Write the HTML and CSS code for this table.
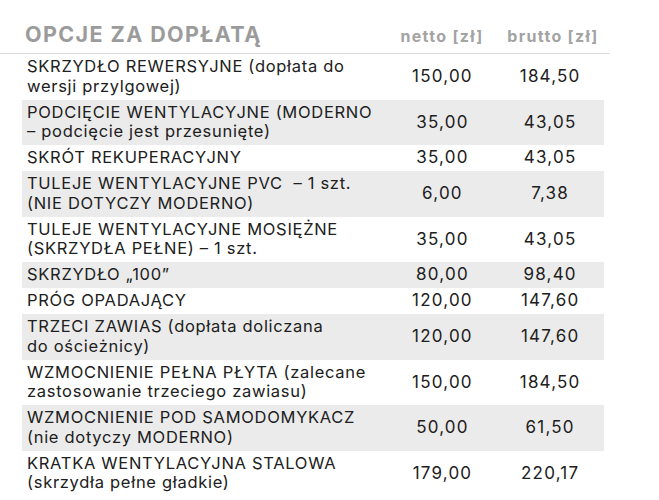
FILE: index.html
```html
<!DOCTYPE html>
<html lang="pl">
<head>
<meta charset="utf-8">
<title>Opcje za dopłatą</title>
<link rel="stylesheet" href="styles.css">
</head>
<body>
<div class="page">
  <div class="head">
    <div class="title">OPCJE ZA DOPŁATĄ</div>
    <div class="col-label">netto [zł]</div>
    <div class="col-label">brutto [zł]</div>
  </div>
  <table class="prices">
    <tbody>
      <tr><td class="name">SKRZYDŁO REWERSYJNE (dopłata do<br>wersji przylgowej)</td><td class="num">150,00</td><td class="num">184,50</td></tr>
      <tr class="alt"><td class="name">PODCIĘCIE WENTYLACYJNE (MODERNO<br>– podcięcie jest przesunięte)</td><td class="num">35,00</td><td class="num">43,05</td></tr>
      <tr><td class="name">SKRÓT REKUPERACYJNY</td><td class="num">35,00</td><td class="num">43,05</td></tr>
      <tr class="alt"><td class="name">TULEJE WENTYLACYJNE PVC &nbsp;– 1 szt.<br>(NIE DOTYCZY MODERNO)</td><td class="num">6,00</td><td class="num">7,38</td></tr>
      <tr><td class="name">TULEJE WENTYLACYJNE MOSIĘŻNE<br>(SKRZYDŁA PEŁNE) – 1 szt.</td><td class="num">35,00</td><td class="num">43,05</td></tr>
      <tr class="alt"><td class="name">SKRZYDŁO „100”</td><td class="num">80,00</td><td class="num">98,40</td></tr>
      <tr><td class="name">PRÓG OPADAJĄCY</td><td class="num">120,00</td><td class="num">147,60</td></tr>
      <tr class="alt"><td class="name">TRZECI ZAWIAS (dopłata doliczana<br>do ościeżnicy)</td><td class="num">120,00</td><td class="num">147,60</td></tr>
      <tr><td class="name">WZMOCNIENIE PEŁNA PŁYTA (zalecane<br>zastosowanie trzeciego zawiasu)</td><td class="num">150,00</td><td class="num">184,50</td></tr>
      <tr class="alt"><td class="name">WZMOCNIENIE POD SAMODOMYKACZ<br>(nie dotyczy MODERNO)</td><td class="num">50,00</td><td class="num">61,50</td></tr>
      <tr><td class="name">KRATKA WENTYLACYJNA STALOWA<br>(skrzydła pełne gładkie)</td><td class="num">179,00</td><td class="num">220,17</td></tr>
    </tbody>
  </table>
</div>
</body>
</html>
```

FILE: styles.css
```css
html, body {
  margin: 0;
  padding: 0;
  background: #ffffff;
}
body {
  font-family: Inter, "Noto Sans", sans-serif;
  color: #202020;
}
.page {
  width: 610px;
}
.head {
  display: flex;
  align-items: baseline;
  height: 54px;
  box-sizing: border-box;
  padding: 0 0 0 25px;
  border-bottom: 1px solid #dedede;
}
.title {
  flex: 1;
  font-size: 21.5px;
  letter-spacing: 1.4px;
  font-weight: 700;
  color: #9b9b9b;
  padding-top: 24px;
  line-height: 20px;
}
.col-label {
  width: 108px;
  text-align: center;
  font-size: 16px;
  letter-spacing: 1.3px;
  font-weight: 700;
  color: #a3a3a3;
}
.col-label:last-child {
  width: 114px;
}
.prices {
  margin-left: 22px;
  width: 582px;
  border-collapse: collapse;
}
.prices td {
  padding: 3.25px 0;
  font-size: 16.5px;
  letter-spacing: 0.7px;
  line-height: 19.5px;
  vertical-align: middle;
}
.prices .name {
  padding-left: 5px;
  width: 363px;
}
.prices .num {
  text-align: center;
  font-size: 17px;
  letter-spacing: 1.2px;
  width: 108px;
}
.prices tr.alt td {
  background: #ebebeb;
}
```
